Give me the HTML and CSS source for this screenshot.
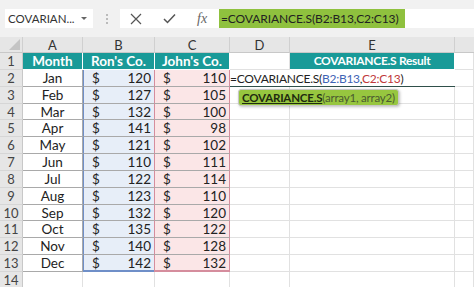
FILE: index.html
```html
<!DOCTYPE html>
<html lang="en">
<head>
  <meta charset="UTF-8" />
  <title>COVARIANCE.S</title>
  <link rel="stylesheet" href="styles.css">
</head>
<body>

  <div class="topbar">
    <div class="namebox">
      <span>COVARIAN...</span>
      <span class="caret"></span>
    </div>
    <div class="grip"><i></i><i></i><i></i></div>
    <div class="formulabar">
      <div class="tools">
        <svg width="12" height="12" viewBox="0 0 12 12"><path d="M1 1L11 11M11 1L1 11" stroke="#555" stroke-width="1.2" fill="none"/></svg>
        <svg width="13" height="11" viewBox="0 0 13 11"><path d="M1 6L4.5 9.5L12 1.5" stroke="#555" stroke-width="1.5" fill="none"/></svg>
        <span class="fx">fx</span>
      </div>
      <div class="formula">=COVARIANCE.S(B2:B13,C2:C13)</div>
    </div>
  </div>

  <div class="sheet">
    <div class="corner"><span></span></div>
    <div class="colhead">A</div>
    <div class="colhead">B</div>
    <div class="colhead">C</div>
    <div class="colhead">D</div>
    <div class="colhead">E</div>
    <div class="colhead blank"></div>

    <div class="rowhead">1</div>
    <div class="cell title">Month</div>
    <div class="cell title">Ron's Co.</div>
    <div class="cell title">John's Co.</div>
    <div class="cell"></div>
    <div class="cell title result">COVARIANCE.S Result</div>
    <div class="cell"></div>

    <div class="rowhead">2</div>
    <div class="cell month">Jan</div>
    <div class="cell ron"><span>$</span><span>120</span></div>
    <div class="cell john"><span>$</span><span>110</span></div>
    <div class="cell editing"><span class="edit-text">=COVARIANCE.S(<b class="ref-b">B2:B13</b>,<b class="ref-c">C2:C13</b>)</span></div>
    <div class="cell editing"></div>
    <div class="cell"></div>

    <div class="rowhead">3</div>
    <div class="cell month">Feb</div>
    <div class="cell ron"><span>$</span><span>127</span></div>
    <div class="cell john"><span>$</span><span>105</span></div>
    <div class="cell"></div><div class="cell"></div><div class="cell"></div>

    <div class="rowhead">4</div>
    <div class="cell month">Mar</div>
    <div class="cell ron"><span>$</span><span>132</span></div>
    <div class="cell john"><span>$</span><span>100</span></div>
    <div class="cell"></div><div class="cell"></div><div class="cell"></div>

    <div class="rowhead">5</div>
    <div class="cell month">Apr</div>
    <div class="cell ron"><span>$</span><span>141</span></div>
    <div class="cell john"><span>$</span><span>98</span></div>
    <div class="cell"></div><div class="cell"></div><div class="cell"></div>

    <div class="rowhead">6</div>
    <div class="cell month">May</div>
    <div class="cell ron"><span>$</span><span>121</span></div>
    <div class="cell john"><span>$</span><span>102</span></div>
    <div class="cell"></div><div class="cell"></div><div class="cell"></div>

    <div class="rowhead">7</div>
    <div class="cell month">Jun</div>
    <div class="cell ron"><span>$</span><span>110</span></div>
    <div class="cell john"><span>$</span><span>111</span></div>
    <div class="cell"></div><div class="cell"></div><div class="cell"></div>

    <div class="rowhead">8</div>
    <div class="cell month">Jul</div>
    <div class="cell ron"><span>$</span><span>122</span></div>
    <div class="cell john"><span>$</span><span>114</span></div>
    <div class="cell"></div><div class="cell"></div><div class="cell"></div>

    <div class="rowhead">9</div>
    <div class="cell month">Aug</div>
    <div class="cell ron"><span>$</span><span>123</span></div>
    <div class="cell john"><span>$</span><span>110</span></div>
    <div class="cell"></div><div class="cell"></div><div class="cell"></div>

    <div class="rowhead">10</div>
    <div class="cell month">Sep</div>
    <div class="cell ron"><span>$</span><span>132</span></div>
    <div class="cell john"><span>$</span><span>120</span></div>
    <div class="cell"></div><div class="cell"></div><div class="cell"></div>

    <div class="rowhead">11</div>
    <div class="cell month">Oct</div>
    <div class="cell ron"><span>$</span><span>135</span></div>
    <div class="cell john"><span>$</span><span>122</span></div>
    <div class="cell"></div><div class="cell"></div><div class="cell"></div>

    <div class="rowhead">12</div>
    <div class="cell month">Nov</div>
    <div class="cell ron"><span>$</span><span>140</span></div>
    <div class="cell john"><span>$</span><span>128</span></div>
    <div class="cell"></div><div class="cell"></div><div class="cell"></div>

    <div class="rowhead">13</div>
    <div class="cell month">Dec</div>
    <div class="cell ron last"><span>$</span><span>142</span></div>
    <div class="cell john last"><span>$</span><span>132</span></div>
    <div class="cell"></div><div class="cell"></div><div class="cell"></div>

    <div class="rowhead">14</div>
    <div class="cell"></div><div class="cell"></div><div class="cell"></div>
    <div class="cell"></div><div class="cell"></div><div class="cell"></div>

    <!-- function hint tooltip -->
    <div class="hint"><u>COVARIANCE.S</u><span>(array1, array2)</span></div>
  </div>

</body>
</html>
```

FILE: styles.css
```css
body {
  margin: 0;
  background: #fff;
  font-family: Lato, 'Open Sans', sans-serif;
  color: #222;
  width: 474px;
  height: 287px;
  overflow: hidden;
}

.topbar {
  height: 37px;
  background: #f1f1f1;
  display: flex;
  align-items: flex-start;
  padding-top: 9px;
  box-sizing: border-box;
}

.namebox {
  margin-left: 5px;
  width: 88px;
  height: 19px;
  background: #fff;
  display: flex;
  align-items: center;
  justify-content: space-between;
  padding: 0 6px 0 3px;
  box-sizing: border-box;
  font-size: 11.5px;
  color: #333;
}

.caret {
  width: 0;
  height: 0;
  border-left: 3px solid transparent;
  border-right: 3px solid transparent;
  border-top: 3px solid #666;
}

.grip {
  width: 27px;
  height: 19px;
  display: flex;
  flex-direction: column;
  align-items: center;
  justify-content: center;
  gap: 2px;
}

.grip i {
  width: 2px;
  height: 2px;
  background: #bbb;
}

.formulabar {
  flex: 1;
  height: 19px;
  background: #fff;
  display: flex;
  align-items: center;
}

.tools {
  width: 99px;
  display: flex;
  align-items: center;
  gap: 21px;
  padding-left: 10px;
  box-sizing: border-box;
}

.fx {
  font-family: 'Liberation Serif', serif;
  font-style: italic;
  font-size: 14px;
  color: #666;
}

.formula {
  width: 186px;
  height: 19px;
  background: #8fc13e;
  font-size: 12px;
  letter-spacing: -0.1px;
  line-height: 19px;
  padding-left: 2px;
  box-sizing: border-box;
  white-space: nowrap;
  color: #222;
}

.sheet {
  position: relative;
  display: grid;
  grid-template-columns: 23px 60px 72px 75px 60px 165px 19px;
  grid-template-rows: 16px repeat(14, 16.85px);
  font-size: 13.5px;
}

.corner {
  background: #e6e6e6;
  border-right: 1px solid #d0d0d0;
  border-bottom: 1px solid #c8c8c8;
  position: relative;
}

.corner span {
  position: absolute;
  right: 2px;
  bottom: 2px;
  width: 0;
  height: 0;
  border-left: 11px solid transparent;
  border-bottom: 11px solid #c4c4c4;
}

.colhead {
  background: #e6e6e6;
  border-right: 1px solid #d0d0d0;
  border-bottom: 1px solid #c8c8c8;
  text-align: center;
  line-height: 16px;
  font-size: 13px;
  color: #333;
}

.colhead.blank {
  border-right: none;
}

.rowhead {
  background: #e6e6e6;
  border-right: 1px solid #c8c8c8;
  border-bottom: 1px solid #d6d6d6;
  text-align: center;
  line-height: 16px;
  font-size: 13px;
  color: #444;
}

.cell {
  border-right: 1px solid #e1e1e1;
  border-bottom: 1px solid #e1e1e1;
  line-height: 16px;
  white-space: nowrap;
}

.title {
  background: #199a98;
  color: #fff;
  font-weight: bold;
  text-align: center;
  border-right: 1px solid #fff;
  border-bottom: 1px solid #fff;
}

.title.result {
  font-size: 12px;
  letter-spacing: -0.3px;
}

.month {
  text-align: center;
  border-right: 1px solid #a9a9a9;
  border-bottom: 1px solid #a9a9a9;
}

.ron, .john {
  display: flex;
  justify-content: space-between;
  padding: 0 3px 0 8px;
  border-bottom: 1px solid #a9a9a9;
}

.ron {
  background: #e7eef8;
  border-left: 1px solid #6f8fc8;
  border-right: 1px solid #6f8fc8;
}

.john {
  background: #fbe6e7;
  border-left: 1px solid #d58d9d;
  border-right: 1px solid #d58d9d;
  margin-left: -1px;
}

.ron.last {
  border-bottom: 2px solid #6f8fc8;
}

.john.last {
  border-bottom: 2px solid #d58d9d;
}

.editing {
  border-right: none;
  border-bottom: 1.5px solid #2f4f4a;
  overflow: visible;
}

.edit-text {
  font-size: 12px;
  letter-spacing: -0.25px;
}

.ref-b {
  font-weight: normal;
  color: #3f64b5;
}

.ref-c {
  font-weight: normal;
  color: #c0393b;
}

.hint {
  position: absolute;
  left: 238px;
  top: 52px;
  height: 15px;
  padding: 0 3px;
  background: #97c63f;
  border: 1px solid #c7c7c7;
  border-radius: 3px;
  box-shadow: 1px 1px 3px rgba(0,0,0,0.25);
  font-size: 11.5px;
  letter-spacing: -0.2px;
  line-height: 15px;
  white-space: nowrap;
}

.hint u {
  font-weight: bold;
  color: #1e2a10;
}

.hint span {
  color: #4a5a30;
}
```
